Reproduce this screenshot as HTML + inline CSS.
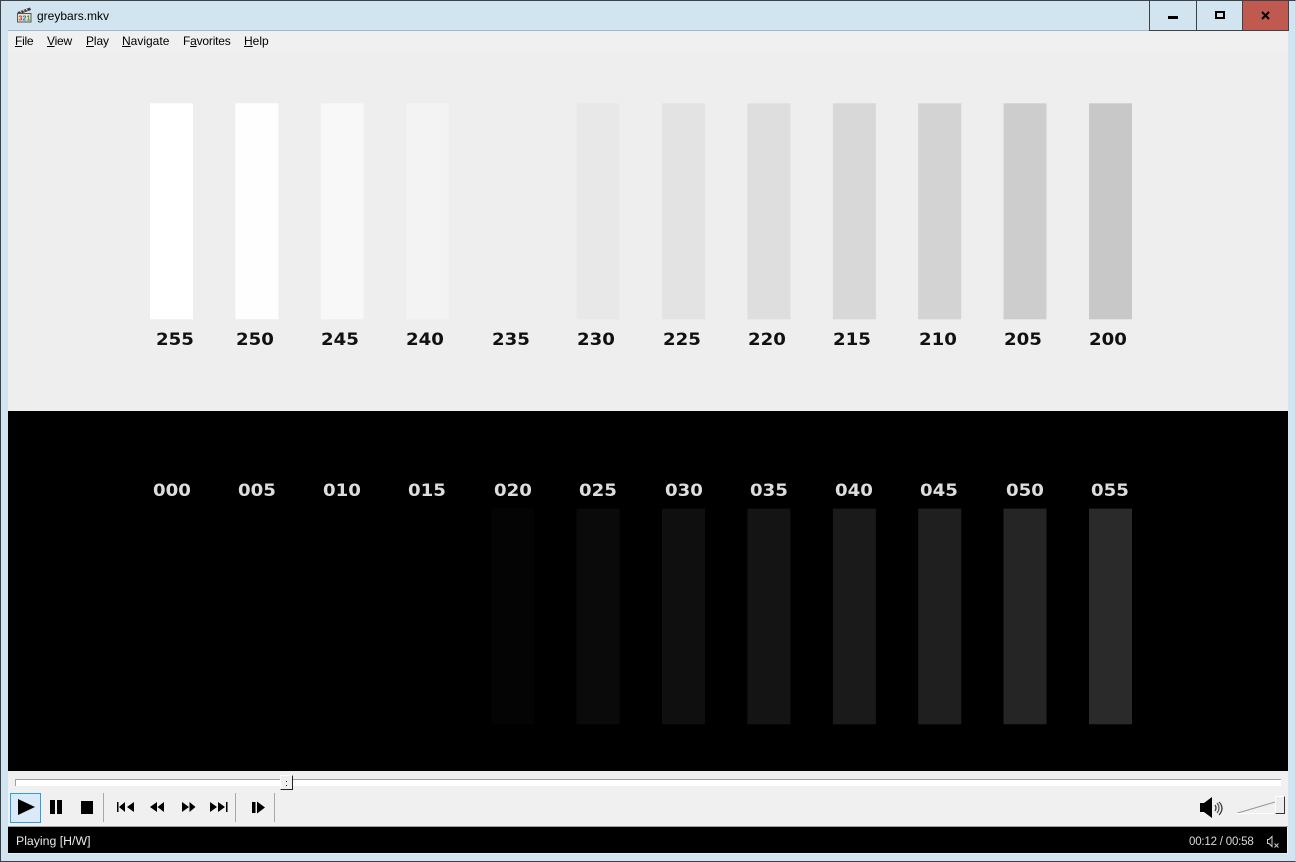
<!DOCTYPE html>
<html><head><meta charset="utf-8"><style>
html,body{margin:0;padding:0;width:1296px;height:862px;overflow:hidden;background:#d1e4ef;font-family:"Liberation Sans",sans-serif}
div{position:absolute}
.t{font:bold 16.500px "DejaVu Sans",sans-serif;width:60px;text-align:center;transform:scaleX(1.1);line-height:18px;white-space:nowrap;filter:blur(.3px)}
.m{top:34px;font-size:12px;line-height:14px;color:#000;white-space:nowrap}
</style></head><body>
<div style="left:0;top:0;width:1296px;height:862px;box-sizing:border-box;border:1px solid #3c4248;border-right-color:#c4d6e2;"></div>
<div style="left:8px;top:31px;width:1280px;height:823px;background:#f0f0f0"></div>
<div style="left:8px;top:30px;width:1141px;height:1px;background:#9fb7cf"></div>
<svg style="position:absolute;left:16px;top:6px" width="17" height="17" viewBox="0 0 17 17">
<path d="M1.500 6L14 1.500l1 2.500L2.500 8.500z" fill="#3a3a3a"/>
<path d="M4 5l1.500 1.500M7 4l1.500 1.500M10 3l1.500 1.500" stroke="#ddd" stroke-width="1"/>
<rect x="1.500" y="7.500" width="13.500" height="8.500" fill="#e4e0cf" stroke="#555"/>
<text x="2.500" y="14.500" font-family="Liberation Sans" font-weight="bold" font-size="7" fill="#c8402a">3</text>
<text x="6.500" y="14.500" font-family="Liberation Sans" font-weight="bold" font-size="7" fill="#2f79b5">2</text>
<text x="10.500" y="14.500" font-family="Liberation Sans" font-weight="bold" font-size="7" fill="#3c9a3c">1</text>
</svg>
<div style="left:37px;top:9px;font-size:12px;line-height:15px;color:#000">greybars.mkv</div>
<div style="left:1149px;top:0;width:48px;height:31px;box-sizing:border-box;border:1px solid #3c4248;background:#d1e4ef"></div>
<div style="left:1196px;top:0;width:47px;height:31px;box-sizing:border-box;border:1px solid #3c4248;background:#d1e4ef"></div>
<div style="left:1242px;top:0;width:47px;height:31px;box-sizing:border-box;border:1px solid #3c4248;background:#c0594f"></div>
<div style="left:1168px;top:16px;width:10px;height:3px;background:#000"></div>
<div style="left:1215px;top:11px;width:10px;height:8px;box-sizing:border-box;border:2px solid #000"></div>
<svg style="position:absolute;left:1261px;top:11px" width="9" height="9" viewBox="0 0 9 9"><path d="M1 1l7 7M8 1L1 8" stroke="#000" stroke-width="2"/></svg>
<div class="m" style="left:15px;letter-spacing:-.25px"><u>F</u>ile</div>
<div class="m" style="left:47px;letter-spacing:-.2px"><u>V</u>iew</div>
<div class="m" style="left:86px;letter-spacing:-.1px"><u>P</u>lay</div>
<div class="m" style="left:122px"><u>N</u>avigate</div>
<div class="m" style="left:183px;letter-spacing:-.2px">F<u>a</u>vorites</div>
<div class="m" style="left:244px"><u>H</u>elp</div>
<div style="left:8px;top:52px;width:1280px;height:359px;background:#eee"></div>
<div style="left:8px;top:411px;width:1280px;height:360px;background:#000"></div>
<svg style="position:absolute;left:0;top:0" width="1296" height="862" viewBox="0 0 1296 862">
<g>
<rect x="150" y="103.300" width="43" height="216" fill="#fff"/>
<rect x="235.400" y="103.300" width="43" height="216" fill="#fefefe"/>
<rect x="320.700" y="103.300" width="43" height="216" fill="#f8f8f8"/>
<rect x="406.100" y="103.300" width="43" height="216" fill="#f3f3f3"/>
<rect x="576.500" y="103.300" width="43" height="216" fill="#e8e8e8"/>
<rect x="662" y="103.300" width="43" height="216" fill="#e3e3e3"/>
<rect x="747.400" y="103.300" width="43" height="216" fill="#dedede"/>
<rect x="832.900" y="103.300" width="43" height="216" fill="#d8d8d8"/>
<rect x="918.200" y="103.300" width="43" height="216" fill="#d3d3d3"/>
<rect x="1003.500" y="103.300" width="43" height="216" fill="#cdcdcd"/>
<rect x="1089" y="103.300" width="43" height="216" fill="#c8c8c8"/>
<rect x="491.400" y="508.600" width="43" height="215.700" fill="#040404"/>
<rect x="576.500" y="508.600" width="43" height="215.700" fill="#0a0a0a"/>
<rect x="662" y="508.600" width="43" height="215.700" fill="#0f0f0f"/>
<rect x="747.400" y="508.600" width="43" height="215.700" fill="#141414"/>
<rect x="832.900" y="508.600" width="43" height="215.700" fill="#1a1a1a"/>
<rect x="918.200" y="508.600" width="43" height="215.700" fill="#1f1f1f"/>
<rect x="1003.500" y="508.600" width="43" height="215.700" fill="#252525"/>
<rect x="1089" y="508.600" width="43" height="215.700" fill="#2a2a2a"/>
</g>
</svg>
<div class="t" style="left:145px;top:331px;color:#111">255</div>
<div class="t" style="left:225px;top:331px;color:#111">250</div>
<div class="t" style="left:310px;top:331px;color:#111">245</div>
<div class="t" style="left:395px;top:331px;color:#111">240</div>
<div class="t" style="left:481px;top:331px;color:#111">235</div>
<div class="t" style="left:566px;top:331px;color:#111">230</div>
<div class="t" style="left:652px;top:331px;color:#111">225</div>
<div class="t" style="left:737px;top:331px;color:#111">220</div>
<div class="t" style="left:822px;top:331px;color:#111">215</div>
<div class="t" style="left:908px;top:331px;color:#111">210</div>
<div class="t" style="left:993px;top:331px;color:#111">205</div>
<div class="t" style="left:1078px;top:331px;color:#111">200</div>
<div class="t" style="left:142px;top:482px;color:#ddd">000</div>
<div class="t" style="left:227px;top:482px;color:#ddd">005</div>
<div class="t" style="left:312px;top:482px;color:#ddd">010</div>
<div class="t" style="left:397px;top:482px;color:#ddd">015</div>
<div class="t" style="left:483px;top:482px;color:#ddd">020</div>
<div class="t" style="left:568px;top:482px;color:#ddd">025</div>
<div class="t" style="left:654px;top:482px;color:#ddd">030</div>
<div class="t" style="left:739px;top:482px;color:#ddd">035</div>
<div class="t" style="left:824px;top:482px;color:#ddd">040</div>
<div class="t" style="left:909px;top:482px;color:#ddd">045</div>
<div class="t" style="left:995px;top:482px;color:#ddd">050</div>
<div class="t" style="left:1080px;top:482px;color:#ddd">055</div>
<div style="left:15px;top:779px;width:1266px;height:7px;box-sizing:border-box;background:#fff;border-top:1px solid #a0a0a0;border-left:1px solid #a0a0a0"></div>
<div style="left:280px;top:775px;width:13px;height:15px;box-sizing:border-box;background:#f0f0f0;border:1px solid #fff;border-right:1px solid #222;border-bottom:1px solid #222"></div>
<div style="left:286px;top:781px;width:1px;height:1px;background:#222"></div>
<div style="left:286px;top:785px;width:1px;height:1px;background:#222"></div>
<div style="left:10px;top:793px;width:31px;height:30px;box-sizing:border-box;background:#dbeafb;border:1px solid #2ba0dc"></div>
<svg style="position:absolute;left:0;top:790px" width="300" height="40" viewBox="0 0 300 40" fill="#000">
<path d="M18 9l17 8-17 8z"/>
<rect x="50" y="10" width="5" height="14"/><rect x="57" y="10" width="5" height="14"/>
<rect x="81" y="11" width="12" height="13"/>
<rect x="117" y="12" width="1.500" height="10"/><path d="M125 12v10l-6-5zM134 12v10l-7-5z"/>
<path d="M157 12v10l-7-5zM164 12v10l-6.500-5z"/>
<path d="M182 12v10l7-5zM189.500 12v10l6-5z"/>
<path d="M210 12v10l7-5zM218 12v10l7-5z"/><rect x="226" y="12" width="1.500" height="10"/>
<rect x="252" y="12" width="3.500" height="11"/><path d="M257 11.500v12l8-6z"/>
<g fill="#a8a8a8"><rect x="103" y="3" width="1" height="29"/><rect x="235" y="3" width="1" height="29"/><rect x="274" y="3" width="1" height="29"/></g>
</svg>
<svg style="position:absolute;left:1190px;top:790px" width="106" height="40" viewBox="0 0 106 40" fill="none">
<path d="M10 13h4l8-6v21l-8-6h-4z" fill="#000"/>
<path d="M25 15q2 3 0 6" stroke="#444" stroke-width="1.400"/>
<path d="M27 13q4 5 0 10" stroke="#555" stroke-width="1.200"/>
<path d="M29 12q6 6 0 13" stroke="#333" stroke-width="1.200"/>
<path d="M46 23.500L85 12" stroke="#999"/>
<path d="M46 23.500H85" stroke="#fff"/>
<rect x="85.500" y="6.500" width="9" height="17" fill="#ececec" stroke="#fff"/>
<path d="M94.500 6.500v17h-9" stroke="#333"/>
</svg>
<div style="left:8px;top:826px;width:1280px;height:1px;background:#a0a0a0"></div>
<div style="left:8px;top:827px;width:1279px;height:26px;background:#000"></div>
<div style="left:16px;top:834px;font-size:12.300px;line-height:14px;color:#e8e8e8;white-space:nowrap">Playing [H/W]</div>
<div style="left:1189px;top:835px;font-size:11.500px;line-height:14px;color:#d9d9d9;white-space:nowrap;letter-spacing:-.2px">00:12 / 00:58</div>
<svg style="position:absolute;left:1264px;top:833px" width="20" height="16" viewBox="0 0 20 16" fill="none" stroke="#d0d0d0"><path d="M3.500 6.500h1.500l3-3v10l-3-3h-1.500z"/><path d="M10.500 10.500l4 4M14.500 10.500l-4 4"/></svg>
</body></html>
